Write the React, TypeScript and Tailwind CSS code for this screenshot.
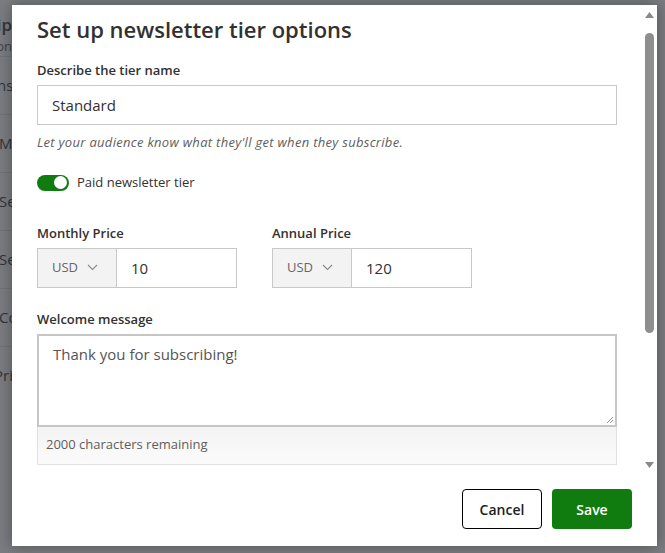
import React from "react"

const FONT = { fontFamily: '"Segoe UI", "Open Sans", "Noto Sans", sans-serif' }

/* ─── background page (mostly hidden under the overlay) ─────────────────── */

const PAGE_ROWS = ["Options", "Manage", "Settings", "Settings", "Content", "Privacy"]

function BackgroundPage() {
  return (
    <div className="flex w-[12px] flex-col overflow-hidden pt-[14px] text-[#444]">
      <div className="-ml-[58px] whitespace-nowrap text-[17px] font-semibold leading-[22px]">Subscription</div>
      <div className="-ml-[60px] whitespace-nowrap text-[13px] leading-[20px] text-[#666]">Informational</div>
      {PAGE_ROWS.map((r, i) => (
        <div key={i} className="flex h-[58px] items-center whitespace-nowrap border-t border-[#e5e5e5] text-[15px]">
          <span className={i === 0 ? "-ml-[42px]" : i === 5 ? "-ml-[6px]" : "-ml-[1px]"}>{r}</span>
        </div>
      ))}
    </div>
  )
}

/* ─── bits ──────────────────────────────────────────────────────────────── */

function Label({ children }: { children: React.ReactNode }) {
  return <div className="text-[13px] font-semibold leading-[18px] text-[#323130]">{children}</div>
}

function PriceField({ label, value }: { label: string; value: string }) {
  return (
    <div className="flex flex-col gap-[6px]">
      <Label>{label}</Label>
      <div className="flex h-[40px] w-[200px] border border-[#c8c8c8]">
        <div className="flex w-[79px] shrink-0 items-center gap-[9px] border-r border-[#c8c8c8] bg-[#f3f3f3] pl-[14px] text-[13px] text-[#666]">
          USD
          <svg width="11" height="7" viewBox="0 0 11 7" fill="none" stroke="#8a8a8a" strokeWidth="1.1">
            <path d="M1 1l4.5 4.5L10 1" />
          </svg>
        </div>
        <div className="flex flex-1 items-center pl-[14px] pt-[2px] text-[15px] text-[#323130]">{value}</div>
      </div>
    </div>
  )
}

function Scrollbar() {
  return (
    <div className="flex w-[12px] shrink-0 flex-col items-center pt-[7px] pb-[4px]">
      <svg width="9" height="6" viewBox="0 0 9 6"><path d="M0 6L4.5 0L9 6z" fill="#8a8a8a" /></svg>
      <div className="mt-[15px] h-[300px] w-[9px] rounded-full bg-[#8e8e8e]" />
      <div className="flex-1" />
      <svg width="9" height="6" viewBox="0 0 9 6"><path d="M0 0L4.5 6L9 0z" fill="#8a8a8a" /></svg>
    </div>
  )
}

/* ─── dialog ────────────────────────────────────────────────────────────── */

function TierDialog() {
  return (
    <div className="absolute left-[12px] top-[5px] flex h-[541px] w-[645px] flex-col bg-white shadow-[0_0_14px_rgba(0,0,0,0.35)]">
      <div className="flex h-[467px] shrink-0">
        <div className="flex flex-1 flex-col overflow-hidden pl-[25px] pr-[26px]">
          <h2 className="mt-[10px] text-[22px] font-semibold leading-[28px] text-[#323130]">
            Set up newsletter tier options
          </h2>

          <div className="mt-[18px] flex flex-col gap-[6px]">
            <Label>Describe the tier name</Label>
            <div className="flex h-[40px] items-center border border-[#c8c8c8] pl-[14px] text-[15px] text-[#323130]">
              Standard
            </div>
          </div>

          <p className="mt-[9px] text-[13px] italic leading-[16px] tracking-[0.3px] text-[#605e5c]">
            Let your audience know what they'll get when they subscribe.
          </p>

          <div className="mt-[23px] flex items-center gap-[8px]">
            <div className="flex h-[16px] w-[32px] items-center justify-end rounded-full bg-[#107c10] pr-[2px]">
              <div className="size-[13px] rounded-full bg-white" />
            </div>
            <span className="text-[13px] text-[#323130]">Paid newsletter tier</span>
          </div>

          <div className="mt-[31px] flex gap-[35px]">
            <PriceField label="Monthly Price" value="10" />
            <PriceField label="Annual Price" value="120" />
          </div>

          <div className="mt-[22px] flex flex-col gap-[6px]">
            <Label>Welcome message</Label>
            <div className="flex flex-col border border-[#e1e1e1]">
              <div className="relative -m-px h-[93px] border-2 border-[#c6c6c6] px-[14px] pt-[7px] text-[15px] text-[#555]">
                Thank you for subscribing!
                <svg className="absolute bottom-[1px] right-[1px]" width="8" height="8" viewBox="0 0 8 8" stroke="#777" strokeWidth="0.8">
                  <path d="M7 1L1 7M7 4L4 7" />
                </svg>
              </div>
              <div className="flex h-[38px] items-center bg-gradient-to-b from-[#f3f3f3] to-[#fbfbfb] pl-[8px] text-[13px] text-[#605e5c]">
                2000 characters remaining
              </div>
            </div>
          </div>
        </div>
        <Scrollbar />
        <div className="w-[2px]" />
      </div>

      <div className="flex flex-1 items-start justify-end gap-[10px] pt-[17px] pr-[25px]">
        <button className="h-[40px] w-[80px] rounded-[4px] border border-black bg-white text-[14px] font-semibold text-[#201f1e]">
          Cancel
        </button>
        <button className="h-[40px] w-[80px] rounded-[4px] bg-[#107c10] text-[14px] font-semibold text-white">
          Save
        </button>
      </div>
    </div>
  )
}

export default function App() {
  return (
    <div className="relative h-[553px] w-[665px] overflow-hidden bg-white" style={FONT}>
      <BackgroundPage />
      <div className="absolute inset-0 bg-[rgba(40,44,52,0.62)]" />
      <TierDialog />
    </div>
  )
}
